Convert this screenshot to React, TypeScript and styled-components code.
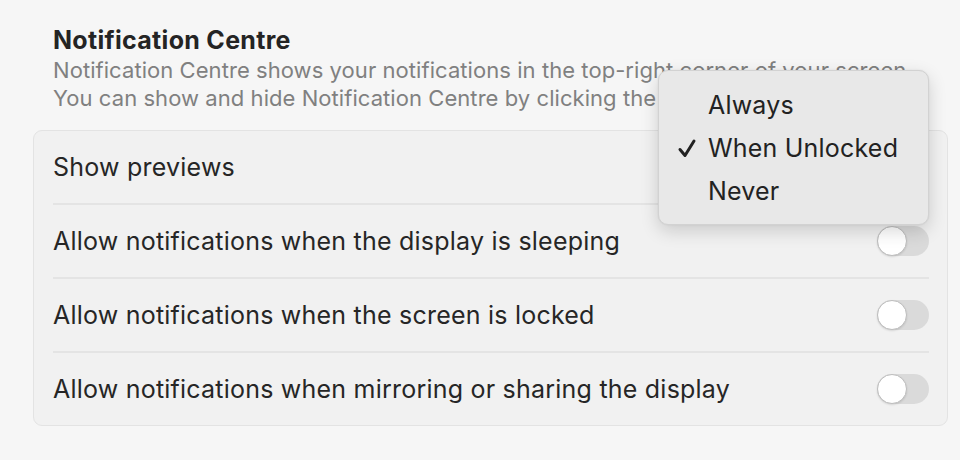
import React from "react";
import styled, { createGlobalStyle } from "styled-components";

const GlobalStyle = createGlobalStyle`
  html, body {
    margin: 0;
    padding: 0;
    background: #f6f6f6;
  }
  body {
    font-family: Inter, "Noto Sans", sans-serif;
    color: #262626;
    -webkit-font-smoothing: antialiased;
  }
`;

const Page = styled.div`
  position: relative;
  width: 960px;
  height: 460px;
  box-sizing: border-box;
  padding: 24px 12px 0 33px;
  overflow: hidden;
`;

const Header = styled.div`
  padding: 0 20px;
  margin-bottom: 18px;
`;

const Title = styled.h2`
  margin: 0;
  font-size: 25px;
  letter-spacing: 0.3px;
  font-weight: 700;
  line-height: 32px;
  color: #242424;
`;

const Description = styled.p`
  margin: 0;
  font-size: 22px;
  letter-spacing: 0.06px;
  line-height: 28px;
  color: #808080;
  white-space: nowrap;
`;

const Card = styled.div`
  width: 915px;
  box-sizing: border-box;
  background: #f1f1f1;
  border: 1px solid #e3e3e3;
  border-radius: 9px;
`;

const Row = styled.div`
  margin: 0 18px 0 19px;
  height: 74px;
  box-sizing: border-box;
  display: flex;
  align-items: center;
  justify-content: space-between;
  font-size: 25px;
  letter-spacing: 0.22px;
  color: #262626;

  &:first-child {
    height: 72px;
  }

  & + & {
    border-top: 2px solid #e4e4e4;
  }
`;

const Toggle = styled.span<{ $on?: boolean }>`
  position: relative;
  width: 52px;
  height: 30px;
  border-radius: 15px;
  background: ${({ $on }) => ($on ? "#2f7cf6" : "#dadada")};
  flex-shrink: 0;

  &::after {
    content: "";
    position: absolute;
    top: 0;
    left: ${({ $on }) => ($on ? "22px" : "0")};
    width: 28px;
    height: 28px;
    border-radius: 50%;
    background: #ffffff;
    border: 1px solid #bdbdbd;
    box-shadow: 0 1px 2px rgba(0, 0, 0, 0.12);
  }
`;

const Menu = styled.div`
  position: absolute;
  left: 658px;
  top: 70px;
  width: 271px;
  box-sizing: border-box;
  padding: 12px 0;
  background: #e8e8e8;
  border: 1px solid #d2d2d2;
  border-radius: 10px;
  box-shadow: 0 6px 18px rgba(0, 0, 0, 0.16), 0 0 2px rgba(0, 0, 0, 0.08);
`;

const MenuItem = styled.div`
  height: 43px;
  display: flex;
  align-items: center;
  padding-left: 49px;
  position: relative;
  font-size: 25px;
  letter-spacing: 0.2px;
  color: #222222;
`;

const Check = styled.svg`
  position: absolute;
  left: 18px;
  top: 12px;
  width: 20px;
  height: 20px;
`;

const settings = [
  { label: "Allow notifications when the display is sleeping", on: false },
  { label: "Allow notifications when the screen is locked", on: false },
  { label: "Allow notifications when mirroring or sharing the display", on: false },
];

const options = ["Always", "When Unlocked", "Never"];

export default function App() {
  return (
    <>
      <GlobalStyle />
      <Page>
        <Header>
          <Title>Notification Centre</Title>
          <Description>
            Notification Centre shows your notifications in the top-right corner of your screen.
          </Description>
          <Description>
            You can show and hide Notification Centre by clicking the clock in the menu bar.
          </Description>
        </Header>
        <Card>
          <Row>
            <span>Show previews</span>
          </Row>
          {settings.map((s) => (
            <Row key={s.label}>
              <span>{s.label}</span>
              <Toggle $on={s.on} />
            </Row>
          ))}
        </Card>
        <Menu>
          {options.map((o) => (
            <MenuItem key={o}>
              {o === "When Unlocked" && (
                <Check viewBox="0 0 20 20">
                  <path
                    d="M3 11.5 L8 17.5 L17 3"
                    fill="none"
                    stroke="#222"
                    strokeWidth="3"
                    strokeLinecap="round"
                    strokeLinejoin="round"
                  />
                </Check>
              )}
              {o}
            </MenuItem>
          ))}
        </Menu>
      </Page>
    </>
  );
}
